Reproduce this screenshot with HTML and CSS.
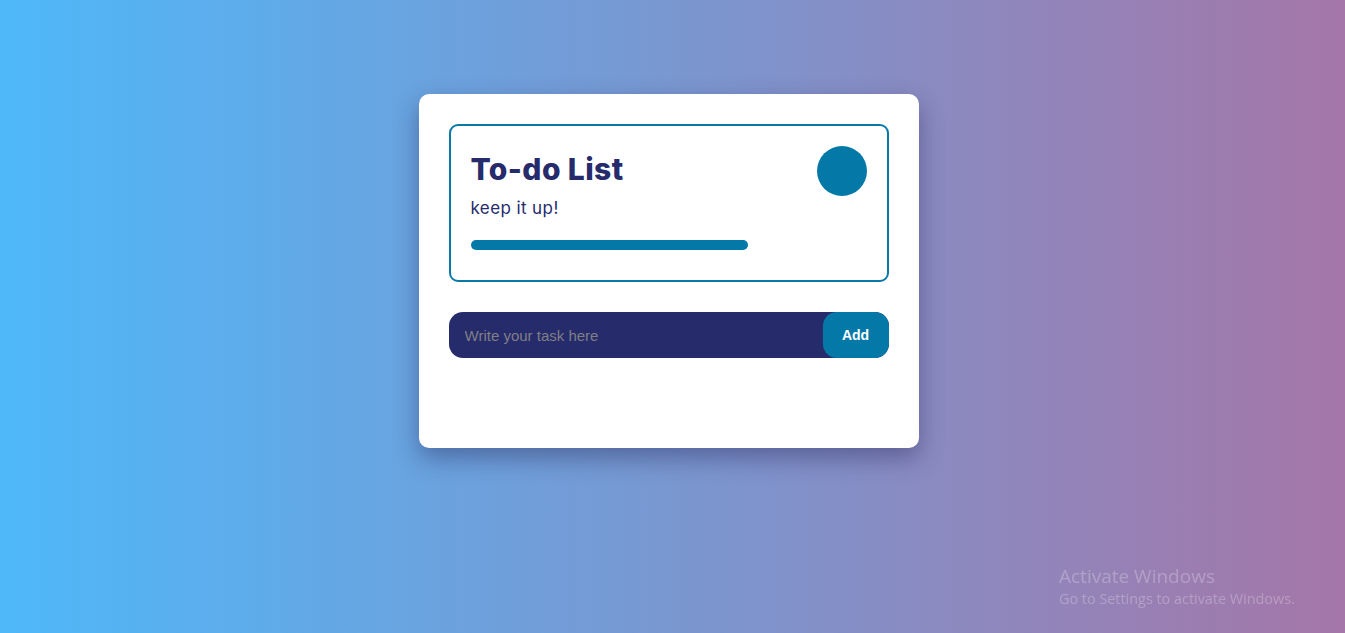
FILE: index.html
```html
<!DOCTYPE html>
<html lang="en">
<head>
<meta charset="utf-8">
<title>To-do List</title>
<link rel="stylesheet" href="styles.css">
</head>
<body>
<main class="todo-card">
  <section class="stats">
    <div class="stats-head">
      <div class="stats-text">
        <h1 class="title">To-do List</h1>
        <p class="subtitle">keep it up!</p>
      </div>
      <div class="stats-circle"></div>
    </div>
    <div class="progress"><div class="progress-fill"></div></div>
  </section>
  <form class="task-form">
    <input class="task-input" type="text" placeholder="Write your task here">
    <button class="task-add" type="button">Add</button>
  </form>
  <ul class="task-list"></ul>
</main>
<div class="activate">
  <div class="activate-title">Activate Windows</div>
  <div class="activate-sub">Go to Settings to activate Windows.</div>
</div>
</body>
</html>
```

FILE: styles.css
```css
* { box-sizing: border-box; }
html, body { margin: 0; padding: 0; }
body {
  height: 633px;
  overflow: hidden;
  background: linear-gradient(to right, #4eb8f9, #a576a8);
  font-family: "Open Sans", "Liberation Sans", sans-serif;
  padding-top: 94px;
}
.todo-card {
  width: 500px;
  height: 354px;
  margin: 0 0 0 calc(50% - 254px);
  background: #fff;
  border-radius: 10px;
  padding: 30px;
  box-shadow: 0 10px 25px rgba(40, 40, 90, 0.45);
}
.stats {
  border: 2px solid #0b79a6;
  border-radius: 9px;
  padding: 20px 20px 30px 20px;
  height: 158px;
}
.stats-head {
  display: flex;
  justify-content: space-between;
  align-items: flex-start;
}
.title {
  margin: 3px 0 0 0;
  font-family: "Inter", sans-serif;
  font-weight: 800;
  font-size: 30px;
  line-height: 40px;
  color: #262b6b;
  letter-spacing: 0.4px;
}
.subtitle {
  margin: 8px 0 0 0;
  font-family: "Inter", sans-serif;
  font-weight: 400;
  font-size: 17px;
  line-height: 22px;
  color: #262b6b;
  letter-spacing: 0.4px;
}
.stats-circle {
  width: 50px;
  height: 50px;
  border-radius: 50%;
  background: #0479a8;
}
.progress {
  margin-top: 21px;
  width: 277px;
  height: 10px;
}
.progress-fill {
  width: 100%;
  height: 100%;
  background: #0479a8;
  border-radius: 5px;
}
.task-form {
  display: flex;
  margin-top: 30px;
  height: 46px;
  border-radius: 14px;
  background: #262b6b;
  overflow: hidden;
}
.task-input {
  flex: 1;
  border: none;
  outline: none;
  background: transparent;
  padding: 0 16px;
  font-family: "Liberation Sans", Arial, sans-serif;
  font-size: 15px;
  color: #fff;
}
.task-input::placeholder { color: #7f7f86; }
.task-add {
  width: 66px;
  border: none;
  border-radius: 14px;
  background: #0479a8;
  color: #fff;
  font-family: "Liberation Sans", Arial, sans-serif;
  font-weight: bold;
  font-size: 14px;
}
.task-list { margin: 0; padding: 0; list-style: none; }
.activate {
  position: fixed;
  left: 1059px;
  top: 564px;
  color: rgba(255, 255, 255, 0.25);
  font-family: "Open Sans", "Liberation Sans", sans-serif;
}
.activate-title { font-size: 19px; line-height: 25px; }
.activate-sub { font-size: 14.4px; line-height: 20px; }
```
